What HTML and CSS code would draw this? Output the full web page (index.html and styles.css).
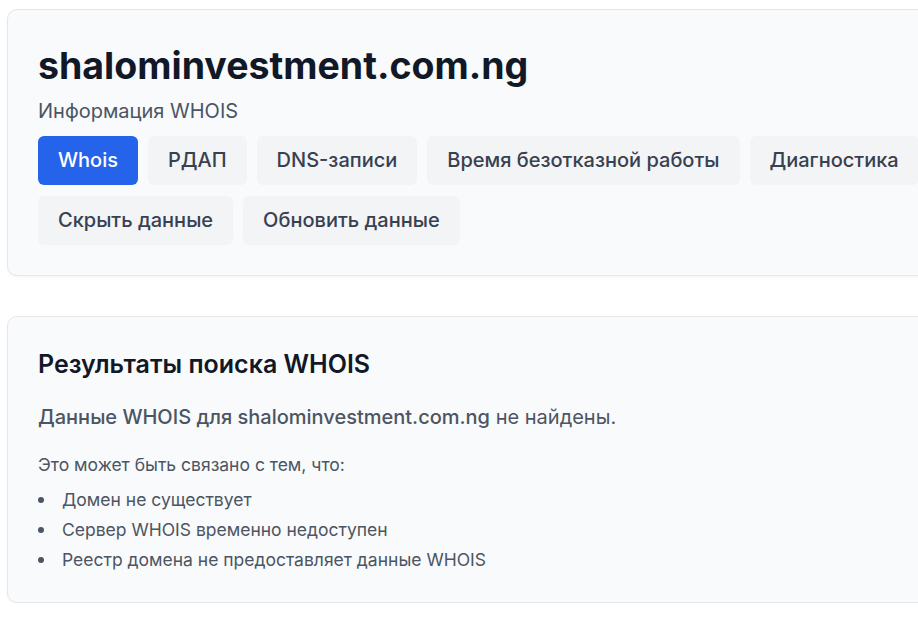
FILE: index.html
```html
<!DOCTYPE html>
<html lang="ru">
<head>
<meta charset="utf-8">
<title>shalominvestment.com.ng — WHOIS</title>
<link rel="stylesheet" href="styles.css">
</head>
<body>
<main class="page">
  <section class="card header-card">
    <h1 class="domain">shalominvestment.com.ng</h1>
    <p class="subtitle">Информация WHOIS</p>
    <nav class="tabs">
      <button class="tab active">Whois</button>
      <button class="tab">РДАП</button>
      <button class="tab">DNS-записи</button>
      <button class="tab">Время безотказной работы</button>
      <button class="tab">Диагностика</button>
      <button class="tab">Скрыть данные</button>
      <button class="tab">Обновить данные</button>
    </nav>
  </section>
  <section class="card result-card">
    <h2 class="result-title">Результаты поиска WHOIS</h2>
    <p class="result-main"><span class="strong">Данные WHOIS для shalominvestment.com.ng</span> не найдены.</p>
    <p class="result-note">Это может быть связано с тем, что:</p>
    <ul class="reasons">
      <li>Домен не существует</li>
      <li>Сервер WHOIS временно недоступен</li>
      <li>Реестр домена не предоставляет данные WHOIS</li>
    </ul>
  </section>
</main>
</body>
</html>
```

FILE: styles.css
```css
html, body {
  margin: 0;
  padding: 0;
  background: #ffffff;
  overflow: hidden;
}
body {
  font-family: Inter, "Noto Sans", sans-serif;
  font-size: 20px;
  color: #111827;
}
.page {
  padding: 9px 0 0 7px;
  width: 1000px;
  display: flex;
  flex-direction: column;
  gap: 40px;
}
.card {
  background: #f9fafb;
  border: 1px solid #e5e7eb;
  border-radius: 10px;
  box-shadow: 0 1px 2px rgba(0,0,0,0.05);
  padding: 30px;
}
.domain {
  margin: 0;
  font-size: 37.5px;
  line-height: 45px;
  font-weight: 700;
  color: #111827;
  padding-top: 3px;
}
.subtitle {
  margin: 8px 0 0;
  font-size: 20px;
  line-height: 30px;
  color: #4b5563;
}
.tabs {
  margin-top: 10px;
  display: flex;
  flex-wrap: wrap;
  gap: 11px 10px;
  width: 900px;
}
.tab {
  font-family: inherit;
  font-size: 20px;
  line-height: 29px;
  font-weight: 500;
  padding: 10px 20px;
  border: 0;
  border-radius: 6px;
  background: #f3f4f6;
  color: #374151;
}
.tab.active {
  background: #2563eb;
  color: #ffffff;
}
.result-title {
  margin: 0;
  font-size: 25px;
  line-height: 35px;
  font-weight: 600;
  color: #111827;
}
.result-main {
  margin: 20px 0 0;
  font-size: 20px;
  line-height: 30px;
  color: #4b5563;
}
.result-main .strong {
  font-weight: 500;
}
.result-note {
  margin: 20px 0 0;
  font-size: 17.5px;
  line-height: 25px;
  color: #4b5563;
}
.reasons {
  margin: 10px 0 0;
  padding: 0;
  list-style: none;
  font-size: 17.5px;
  line-height: 25px;
  color: #4b5563;
  display: flex;
  flex-direction: column;
  gap: 5px;
}
.reasons li {
  display: flex;
  align-items: center;
  gap: 18px;
}
.reasons li::before {
  content: "";
  flex: none;
  width: 6px;
  height: 6px;
  border-radius: 50%;
  background: #4b5563;
}
```
